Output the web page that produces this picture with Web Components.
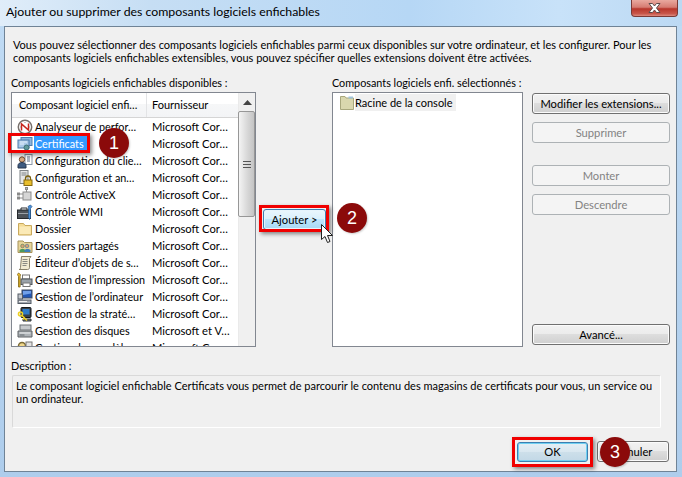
<!DOCTYPE html>
<html lang="fr">
<head>
<meta charset="utf-8">
<title>Ajouter ou supprimer des composants logiciels enfichables</title>
<style>
	html, body { margin: 0; padding: 0; background: #b9d7f2; }
	body { width: 682px; height: 477px; overflow: hidden; font: 11px Lato, "Open Sans", "Liberation Sans", sans-serif; color: #000; }
</style>
</head>
<body>
<snapin-dialog heading="Ajouter ou supprimer des composants logiciels enfichables">
	<p slot="intro">Vous pouvez sélectionner des composants logiciels enfichables parmi ceux disponibles sur votre ordinateur, et les configurer. Pour les composants logiciels enfichables extensibles, vous pouvez spécifier quelles extensions doivent être activées.</p>

	<span slot="left-label">Composants logiciels enfichables disponibles :</span>
	<snapin-list slot="left">
		<snapin-row icon="analyzer" name="Analyseur de perfor…" vendor="Microsoft Cor…"></snapin-row>
		<snapin-row icon="cert" name="Certificats" vendor="Microsoft Cor…" selected></snapin-row>
		<snapin-row icon="client" name="Configuration du clie…" vendor="Microsoft Cor…"></snapin-row>
		<snapin-row icon="lock" name="Configuration et an…" vendor="Microsoft Cor…"></snapin-row>
		<snapin-row icon="activex" name="Contrôle ActiveX" vendor="Microsoft Cor…"></snapin-row>
		<snapin-row icon="wmi" name="Contrôle WMI" vendor="Microsoft Cor…"></snapin-row>
		<snapin-row icon="folder" name="Dossier" vendor="Microsoft Cor…"></snapin-row>
		<snapin-row icon="shared" name="Dossiers partagés" vendor="Microsoft Cor…"></snapin-row>
		<snapin-row icon="scroll" name="Éditeur d’objets de s…" vendor="Microsoft Cor…"></snapin-row>
		<snapin-row icon="printer" name="Gestion de l’impression" vendor="Microsoft Cor…"></snapin-row>
		<snapin-row icon="computer" name="Gestion de l’ordinateur" vendor="Microsoft Cor…"></snapin-row>
		<snapin-row icon="policy" name="Gestion de la straté…" vendor="Microsoft Cor…"></snapin-row>
		<snapin-row icon="disk" name="Gestion des disques" vendor="Microsoft et V…"></snapin-row>
		<snapin-row icon="last" name="Gestion des modèles…" vendor="Microsoft Cor…"></snapin-row>
	</snapin-list>

	<win-button slot="add" kind="hot" style="width:63px">Ajouter &gt;</win-button>

	<span slot="right-label">Composants logiciels enfi. sélectionnés :</span>
	<console-tree slot="right">Racine de la console</console-tree>

	<win-button slot="actions" style="margin-top:1px">Modifier les extensions...</win-button>
	<win-button slot="actions" kind="off" style="margin-top:8px">Supprimer</win-button>
	<win-button slot="actions" kind="off" style="margin-top:22px">Monter</win-button>
	<win-button slot="actions" kind="off" style="margin-top:8px">Descendre</win-button>
	<win-button slot="actions" style="margin-top:auto;margin-bottom:2px">Avancé...</win-button>

	<span slot="desc-label">Description :</span>
	<desc-box slot="desc">Le composant logiciel enfichable Certificats vous permet de parcourir le contenu des magasins de certificats pour vous, un service ou un ordinateur.</desc-box>

	<win-button slot="footer" kind="default" style="width:71px;margin-top:1px">OK</win-button>
	<win-button slot="footer" style="width:72px;margin-left:9px">Annuler</win-button>

	<red-box slot="marks" style="left:8px;top:133px;width:82px;height:20px"></red-box>
	<red-box slot="marks" style="left:259px;top:205px;width:70px;height:27px"></red-box>
	<red-box slot="marks" style="left:512px;top:437px;width:81px;height:30px"></red-box>
	<step-badge slot="marks" style="left:99px;top:128px">1</step-badge>
	<step-badge slot="marks" style="left:337px;top:203px">2</step-badge>
	<step-badge slot="marks" style="left:600px;top:437px">3</step-badge>
	<arrow-cursor slot="marks" style="left:321px;top:224px"></arrow-cursor>
</snapin-dialog>

<script>
const ICONS = {
	analyzer: `<circle cx="8" cy="8" r="6.7" fill="#fff" stroke="#77706c" stroke-width="1.5"/><path d="M4.5 11.5V5l7 6V4.500" fill="none" stroke="#c8261c" stroke-width="1.5"/><path d="M3 8h1M12 8h1M8 3v1" stroke="#999"/>`,
	cert: `<rect x="4" y="1.500" width="11" height="8" fill="#8db4dc" stroke="#4e7cab"/><rect x="1" y="4" width="11" height="8" fill="#a9c9e8" stroke="#4a78a8"/><path d="M3 6h7M3 8h4" stroke="#e6f1fb"/><circle cx="9.500" cy="11.500" r="2.500" fill="#5f9a9c" stroke="#3c6f74"/><path d="M8.500 13.500v2l1-.7 1 .7v-2" fill="#3f7fa5"/>`,
	client: `<rect x="8" y="1.500" width="7" height="10" fill="#fff" stroke="#8b98a8"/><path d="M10 4h3M10 6h3M10 8h3" stroke="#5a6d85"/><circle cx="5" cy="6.500" r="2.700" fill="#d8aa80" stroke="#6c4a33"/><path d="M1 15v-2.500C1 10.500 3 9.500 5 9.500s4 1 4 3V15z" fill="#3d5a80" stroke="#26364e"/>`,
	lock: `<rect x="3" y="0.500" width="8" height="13" fill="#e6e7e7" stroke="#7d8285"/><path d="M4.500 3h5M4.500 5h5" stroke="#7d8285"/><path d="M8.500 10V8.500a2.500 2.500 0 0 1 5 0V10" fill="none" stroke="#7a6110" stroke-width="1.300"/><rect x="7" y="10" width="8" height="5.500" fill="#e8be2c" stroke="#8a6b0e"/>`,
	activex: `<rect x="6" y="5" width="8" height="8" fill="#d6d6d6" stroke="#8d8d8d"/><path d="M9.500 5V1.500M6 7H2M6 11H2" stroke="#8d8d8d"/><rect x="8.500" y="0.500" width="2" height="2" fill="#bbb" stroke="#888"/><rect x="0.500" y="6" width="2" height="2" fill="#bbb" stroke="#888"/><rect x="0.500" y="10" width="2" height="2" fill="#bbb" stroke="#888"/>`,
	wmi: `<rect x="0.500" y="6" width="13" height="8.500" fill="#4d5258" stroke="#25282c"/><path d="M4 6V4h6v2" fill="none" stroke="#25282c"/><path d="M1 9.500h12" stroke="#9aa0a6"/><path d="M11 2.500l2.500-1.500 1.500 1.500-1.500 2v9l-1 2-1-2v-9z" fill="#4c8fd6" stroke="#22588f" stroke-width=".7"/>`,
	folder: `<path d="M1.500 2.500h5l1.500 2h6.500v9.500h-13z" fill="#f5dc96" stroke="#c9a95c"/><path d="M2.500 5.500h11v7.500h-11z" fill="#fbeab7"/>`,
	shared: `<path d="M1 3h5l1.500 1.500H15v10H1z" fill="#e8d59a" stroke="#a6935b"/><circle cx="5.500" cy="8" r="1.800" fill="#d9a274" stroke="#4d7a55" stroke-width=".6"/><circle cx="10" cy="8" r="1.800" fill="#d9a274" stroke="#3f6f9b" stroke-width=".6"/><path d="M2.500 14v-1.500c0-2 6-2 6 0V14z" fill="#4a9a5d"/><path d="M7.500 14v-1.500c0-2 6-2 6 0V14z" fill="#3f7fba"/>`,
	scroll: `<path d="M4.500 1.500h9.500l-1.500 2v9c0 1.500-1 2-2 2H2c1 0 1.500-.7 1.500-2z" fill="#f1ead2" stroke="#88806a"/><path d="M5.500 4.500h5M5.500 6.500h5M5.500 8.500h5M5.500 10.500h4" stroke="#8a8a84"/>`,
	printer: `<rect x="5.500" y="3" width="7" height="4" fill="#fff" stroke="#777"/><rect x="4" y="7" width="11" height="5.500" fill="#9aa2a9" stroke="#4e555b"/><rect x="6" y="11" width="7" height="3.500" fill="#fff" stroke="#777"/><path d="M1.500 1l2 1.500-.4 2v10.500H1.500V4.500L.5 2.500z" fill="#eebf33" stroke="#7f6310" stroke-width=".8"/>`,
	computer: `<rect x="5" y="1" width="10" height="8" fill="#2257b4" stroke="#3f4a5c"/><path d="M6 2h8v2.500L6 6z" fill="#70a0ea"/><rect x="1" y="5" width="4.500" height="5" fill="#c2c6cc" stroke="#555c66"/><rect x="1" y="11" width="13" height="3.500" fill="#a4a9b1" stroke="#555c66"/><path d="M2 12.500h8" stroke="#efefef"/>`,
	policy: `<rect x="4" y="1.500" width="10" height="10" rx="1" fill="#394047" stroke="#14171a"/><rect x="5.500" y="3" width="7" height="5.500" fill="#2e7bc9"/><path d="M6 13h8v2H6z" fill="#6c747c" stroke="#30363b"/><circle cx="3.500" cy="8" r="2" fill="none" stroke="#eed125" stroke-width="1.600"/><path d="M5 9.500l5 5M7.500 12l-1.500 1.500" stroke="#eed125" stroke-width="1.600" fill="none"/>`,
	disk: `<rect x="3" y="2" width="11" height="5" fill="#c6cacd" stroke="#6a7075"/><path d="M1 8h14v6H1z" fill="#adb2b6" stroke="#5c6165"/><path d="M2.500 10h11" stroke="#eef0f1"/><path d="M2.500 12h5" stroke="#63686c"/>`,
	last: `<circle cx="5" cy="6" r="3.500" fill="#f0d78c" stroke="#7b6a35" stroke-width="1.500"/><rect x="9" y="2" width="6" height="11" fill="#e3e3e3" stroke="#777"/>`
};

class SnapinDialog extends HTMLElement {
	constructor() {
		super();
		this.attachShadow({ mode: "open" });
		this.shadowRoot.innerHTML = `
		<style>
			:host {
				display: block;
				position: relative;
				width: 682px;
				height: 477px;
				box-sizing: border-box;
				padding-left: 4px;
				padding-right: 5px;
				background:
					linear-gradient(90deg, #e0edf9 0, #c6def4 22%, #b6d7f5 60%, #c8e2f9 82%, #bcd9f3 100%) no-repeat 0 0 / 100% 26px,
					linear-gradient(#c0dbf4, #aecdec);
			}
			#title {
				height: 26px;
				box-sizing: border-box;
				padding: 4px 0 0 2px;
				font-size: 12.300px;
				line-height: 16px;
				white-space: nowrap;
			}
			#close {
				position: absolute;
				top: 0;
				left: 631px;
				width: 47px;
				height: 17px;
				box-sizing: border-box;
				border: 1px solid #7a3a36;
				border-top: 0;
				border-radius: 0 0 4px 4px;
				background: linear-gradient(#e9a99f, #d67c72 45%, #b8362b 55%, #c8564a 85%, #dd8a7f);
				display: flex;
				align-items: center;
				justify-content: center;
			}
			#panel {
				height: 446px;
				box-sizing: border-box;
				border: 1px solid #6f8396;
				background: #f0f0f0;
				padding: 11px 5px 0 6px;
			}
			#intro ::slotted(p) {
				margin: 0 0 0 2px;
				line-height: 13px;
				width: 650px;
			}
			#intro { height: 37px; }
			#lists {
				display: grid;
				grid-template-columns: 245px 76px 191px 147px;
				grid-template-rows: 17px 255px;
			}
			.label { font-size: 10.800px; line-height: 13px; padding-top: 1px; white-space: nowrap; }
			#add {
				grid-row: 2;
				grid-column: 2;
				display: flex;
				align-items: center;
				padding-left: 7px;
			}
			#actions {
				grid-row: 2;
				grid-column: 4;
				display: flex;
				flex-direction: column;
				padding-left: 9px;
			}
			#desc-label { margin-top: 12px; line-height: 13px; font-size: 10.800px; }
			#desc { margin: 3px 0 0 1px; width: 649px; }
			#footer {
				display: flex;
				padding: 13px 0 0 506px;
			}
		</style>
		<div id="title">${this.getAttribute("heading")}</div>
		<div id="close">
			<svg width="17" height="12" viewBox="0 0 17 12"><path d="M3 1.500h3.500L8.500 4l2-2.500H14L10.500 6l3.500 4.500h-3.500L8.500 8l-2 2.500H3L6.500 6z" fill="#fff" stroke="#5c4a4a" stroke-width="1"/></svg>
		</div>
		<div id="panel">
			<div id="intro"><slot name="intro"></slot></div>
			<div id="lists">
				<div class="label"><slot name="left-label"></slot></div>
				<div></div>
				<div class="label"><slot name="right-label"></slot></div>
				<div></div>
				<slot name="left"></slot>
				<div id="add"><slot name="add"></slot></div>
				<slot name="right"></slot>
				<div id="actions"><slot name="actions"></slot></div>
			</div>
			<div id="desc-label"><slot name="desc-label"></slot></div>
			<div id="desc"><slot name="desc"></slot></div>
			<div id="footer"><slot name="footer"></slot></div>
		</div>
		<slot name="marks"></slot>
	`;
	}
}

class SnapinList extends HTMLElement {
	constructor() {
		super();
		this.attachShadow({ mode: "open" });
		this.shadowRoot.innerHTML = `
		<style>
			:host {
				display: flex;
				box-sizing: border-box;
				width: 245px;
				height: 255px;
				border: 1px solid #828790;
				background: #fff;
				overflow: hidden;
			}
			#main { width: 226px; flex: none; overflow: hidden; }
			#head {
				display: flex;
				height: 25px;
				line-height: 24px;
				box-sizing: border-box;
				background: linear-gradient(#fff 0, #fff 45%, #f6f7f8 46%, #f3f4f6 100%);
				border-bottom: 1px solid #d5d5d5;
			}
			#head div { box-sizing: border-box; white-space: nowrap; }
			#c1 { width: 135px; padding-left: 7px; border-right: 1px solid #e3e4e6; font-size: 10.800px; }
			#c2 { flex: 1; padding-left: 5px; }
			#bar {
				width: 17px;
				flex: none;
				display: flex;
				flex-direction: column;
				background: #f0f0f0;
				border-left: 1px solid #eaeaea;
				box-sizing: border-box;
			}
			#up {
				height: 18px;
				display: flex;
				align-items: center;
				justify-content: center;
			}
			#thumb {
				height: 106px;
				margin-left: -1px;
				box-sizing: border-box;
				border: 1px solid #979797;
				border-radius: 2px;
				background: linear-gradient(90deg, #f4f4f4, #d8d8d8 55%, #c4c4c4);
				display: flex;
				align-items: center;
				justify-content: center;
			}
		</style>
		<div id="main">
			<div id="head"><div id="c1">Composant logiciel enfi…</div><div id="c2">Fournisseur</div></div>
			<slot></slot>
		</div>
		<div id="bar">
			<div id="up"><svg width="9" height="5" viewBox="0 0 9 5"><path d="M4.500 0L9 5H0z" fill="#444"/></svg></div>
			<div id="thumb"><svg width="8" height="7" viewBox="0 0 8 7"><path d="M0 .5h8M0 3.500h8M0 6.500h8" stroke="#555"/></svg></div>
		</div>
	`;
	}
}

class SnapinRow extends HTMLElement {
	constructor() {
		super();
		this.attachShadow({ mode: "open" });
		const icon = ICONS[this.getAttribute("icon")] || "";
		this.shadowRoot.innerHTML = `
		<style>
			:host {
				display: flex;
				align-items: center;
				height: 17px;
				white-space: nowrap;
				line-height: 17px;
			}
			svg { width: 16px; height: 16px; margin-left: 5px; flex: none; }
			#name { width: 113px; margin-left: 1px; padding-left: 1px; box-sizing: border-box; overflow: hidden; font-size: 10.800px; }
			#vendor { margin-left: 5px; font-size: 11.200px; }
			:host([selected]) #name { background: #3399ff; color: #fff; width: 56px; margin-right: 57px; }
		</style>
		<svg viewBox="0 0 16 16">${icon}</svg>
		<div id="name">${this.getAttribute("name")}</div>
		<div id="vendor">${this.getAttribute("vendor")}</div>
	`;
	}
}

class ConsoleTree extends HTMLElement {
	constructor() {
		super();
		this.attachShadow({ mode: "open" });
		this.shadowRoot.innerHTML = `
		<style>
			:host {
				display: block;
				box-sizing: border-box;
				width: 191px;
				height: 255px;
				border: 1px solid #828790;
				background: #fff;
				padding: 1px 0 0 6px;
			}
			#row { display: flex; align-items: center; height: 17px; line-height: 17px; }
			svg { width: 16px; height: 16px; flex: none; }
			#text { background: #f0f0f0; padding: 0 3px 0 0; white-space: nowrap; }
		</style>
		<div id="row">
			<svg viewBox="0 0 16 16"><path d="M1.500 3V1.500h4.500l1 1.500h7.500v11.500h-13z" fill="#d9d7ae" stroke="#a8a77d"/><path d="M9.500 1.500h4.500v2h-4.500z" fill="#9fc3dc"/></svg>
			<span id="text"><slot></slot></span>
		</div>
	`;
	}
}

class WinButton extends HTMLElement {
	constructor() {
		super();
		this.attachShadow({ mode: "open" });
		this.shadowRoot.innerHTML = `
		<style>
			:host {
				display: block;
				flex: none;
				box-sizing: border-box;
				height: 21px;
				font-size: 11.200px;
				line-height: 19px;
				text-align: center;
				white-space: nowrap;
				border: 1px solid #707070;
				border-radius: 3px;
				background: linear-gradient(#f2f2f2, #ebebeb 48%, #dddddd 50%, #cfcfcf);
				box-shadow: inset 0 0 0 1px #fbfbfb;
			}
			:host([kind="off"]) {
				border-color: #adb2b5;
				background: #f4f4f4;
				color: #838383;
				box-shadow: none;
			}
			:host([kind="hot"]) {
				border-color: #3c7fb1;
				background: linear-gradient(#eaf6fd, #d9f0fc 48%, #bee6fd 50%, #a7d9f5);
				box-shadow: inset 0 0 0 1px #e6f4fc;
			}
			:host([kind="default"]) {
				height: 20px;
				line-height: 18px;
				border-color: #3c7fb1;
				background: linear-gradient(#e6eff5, #d9e7f0 48%, #cddfea 50%, #c2d8e6);
				box-shadow: inset 0 0 0 1px #6fd0f2;
			}
		</style>
		<slot></slot>
	`;
	}
}

class DescBox extends HTMLElement {
	constructor() {
		super();
		this.attachShadow({ mode: "open" });
		this.shadowRoot.innerHTML = `
		<style>
			:host {
				display: block;
				box-sizing: border-box;
				height: 53px;
				border: 1px solid #d9d9d9;
				border-right-color: #fff;
				border-bottom-color: #fff;
				border-radius: 2px;
				padding: 3px 3px 0 3px;
				font-size: 11px;
				line-height: 13px;
			}
		</style>
		<slot></slot>
	`;
	}
}

class RedBox extends HTMLElement {
	constructor() {
		super();
		this.attachShadow({ mode: "open" });
		this.shadowRoot.innerHTML = `
		<style>
			:host {
				position: absolute;
				box-sizing: border-box;
				border: 3px solid #f00000;
				box-shadow: 2px 2px 4px rgba(0, 0, 0, .45);
			}
		</style>
	`;
	}
}

class StepBadge extends HTMLElement {
	constructor() {
		super();
		this.attachShadow({ mode: "open" });
		this.shadowRoot.innerHTML = `
		<style>
			:host {
				position: absolute;
				width: 30px;
				height: 30px;
				border-radius: 50%;
				background: #8b0a0a;
				color: #fff;
				font: 18px/30px "Liberation Sans", sans-serif;
				text-align: center;
				box-shadow: 1px 1px 2px rgba(0, 0, 0, .2);
			}
		</style>
		<slot></slot>
	`;
	}
}

class ArrowCursor extends HTMLElement {
	constructor() {
		super();
		this.attachShadow({ mode: "open" });
		this.shadowRoot.innerHTML = `
		<style>
			:host { position: absolute; display: block; width: 13px; height: 20px; line-height: 0; }
		</style>
		<svg width="13" height="20" viewBox="0 0 13 20"><path d="M.5.500v15l3.500-3 2.500 6 2.500-1-2.500-6h5z" fill="#fff" stroke="#222" stroke-width="1"/></svg>
	`;
	}
}

window.customElements.define("snapin-dialog", SnapinDialog);
window.customElements.define("snapin-list", SnapinList);
window.customElements.define("snapin-row", SnapinRow);
window.customElements.define("console-tree", ConsoleTree);
window.customElements.define("win-button", WinButton);
window.customElements.define("desc-box", DescBox);
window.customElements.define("red-box", RedBox);
window.customElements.define("step-badge", StepBadge);
window.customElements.define("arrow-cursor", ArrowCursor);
</script>
</body>
</html>
